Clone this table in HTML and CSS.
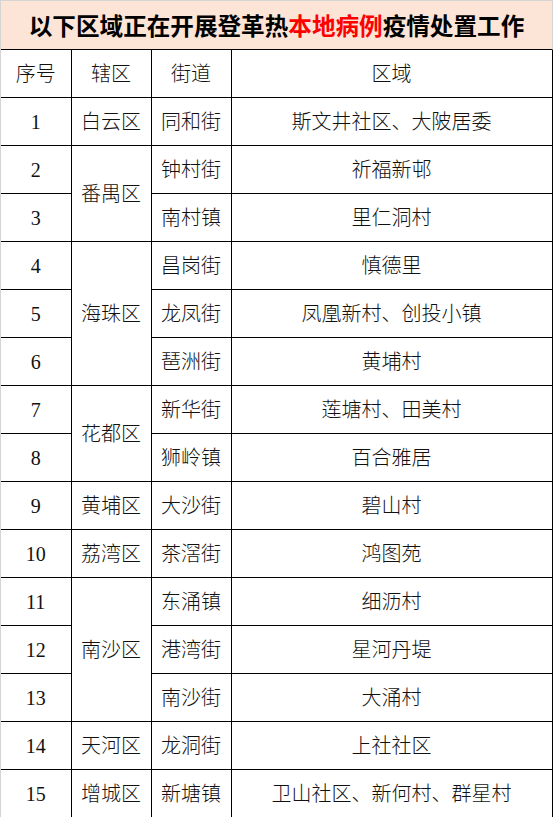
FILE: index.html
```html
<!DOCTYPE html>
<html lang="zh-CN">
<head>
<meta charset="utf-8">
<title>疫情处置工作区域</title>
<link rel="stylesheet" href="styles.css">
</head>
<body>
<div class="sheet">
  <div class="title">以下区域正在开展登革热<span class="red">本地病例</span>疫情处置工作</div>
  <table class="grid">
    <colgroup>
      <col class="c-no"><col class="c-dist"><col class="c-street"><col class="c-area">
    </colgroup>
    <tr><td>序号</td><td>辖区</td><td>街道</td><td>区域</td></tr>
    <tr><td>1</td><td>白云区</td><td>同和街</td><td>斯文井社区、大陂居委</td></tr>
    <tr><td>2</td><td rowspan="2">番禺区</td><td>钟村街</td><td>祈福新邨</td></tr>
    <tr><td>3</td><td>南村镇</td><td>里仁洞村</td></tr>
    <tr><td>4</td><td rowspan="3">海珠区</td><td>昌岗街</td><td>慎德里</td></tr>
    <tr><td>5</td><td>龙凤街</td><td>凤凰新村、创投小镇</td></tr>
    <tr><td>6</td><td>琶洲街</td><td>黄埔村</td></tr>
    <tr><td>7</td><td rowspan="2">花都区</td><td>新华街</td><td>莲塘村、田美村</td></tr>
    <tr><td>8</td><td>狮岭镇</td><td>百合雅居</td></tr>
    <tr><td>9</td><td>黄埔区</td><td>大沙街</td><td>碧山村</td></tr>
    <tr><td>10</td><td>荔湾区</td><td>茶滘街</td><td>鸿图苑</td></tr>
    <tr><td>11</td><td rowspan="3">南沙区</td><td>东涌镇</td><td>细沥村</td></tr>
    <tr><td>12</td><td>港湾街</td><td>星河丹堤</td></tr>
    <tr><td>13</td><td>南沙街</td><td>大涌村</td></tr>
    <tr><td>14</td><td>天河区</td><td>龙洞街</td><td>上社社区</td></tr>
    <tr><td>15</td><td>增城区</td><td>新塘镇</td><td>卫山社区、新何村、群星村</td></tr>
  </table>
</div>
</body>
</html>
```

FILE: styles.css
```css
html, body {
  margin: 0;
  padding: 0;
  background: #ffffff;
}

.sheet {
  width: 552px;
  border-left: 1px solid #d4d4d4;
  border-top: 1px solid #d4d4d4;
}

.title {
  height: 48px;
  background: #fce4d6;
  border-right: 1px solid #d4d4d4;
  border-bottom: 1px solid #000;
  display: flex;
  align-items: center;
  justify-content: center;
  font-family: "Noto Sans CJK SC", sans-serif;
  font-weight: 700;
  font-size: 23.6px;
  color: #000;
  white-space: nowrap;
}

.red {
  color: #ff0000;
}

.grid {
  width: 551px;
  border-collapse: collapse;
  table-layout: fixed;
  font-family: "Liberation Serif", "Noto Sans CJK SC", serif;
  font-size: 20px;
  font-weight: 300;
  color: #111;
}

.c-no { width: 70px; }
.c-dist { width: 80px; }
.c-street { width: 80px; }
.c-area { width: 321px; }

.grid td {
  border: 1px solid #000;
  height: 47px;
  padding: 0;
  text-align: center;
  vertical-align: middle;
  line-height: 1;
}

.grid tr:first-child td {
  border-top: none;
}

.grid tr td:first-child {
  border-left: none;
}
```
